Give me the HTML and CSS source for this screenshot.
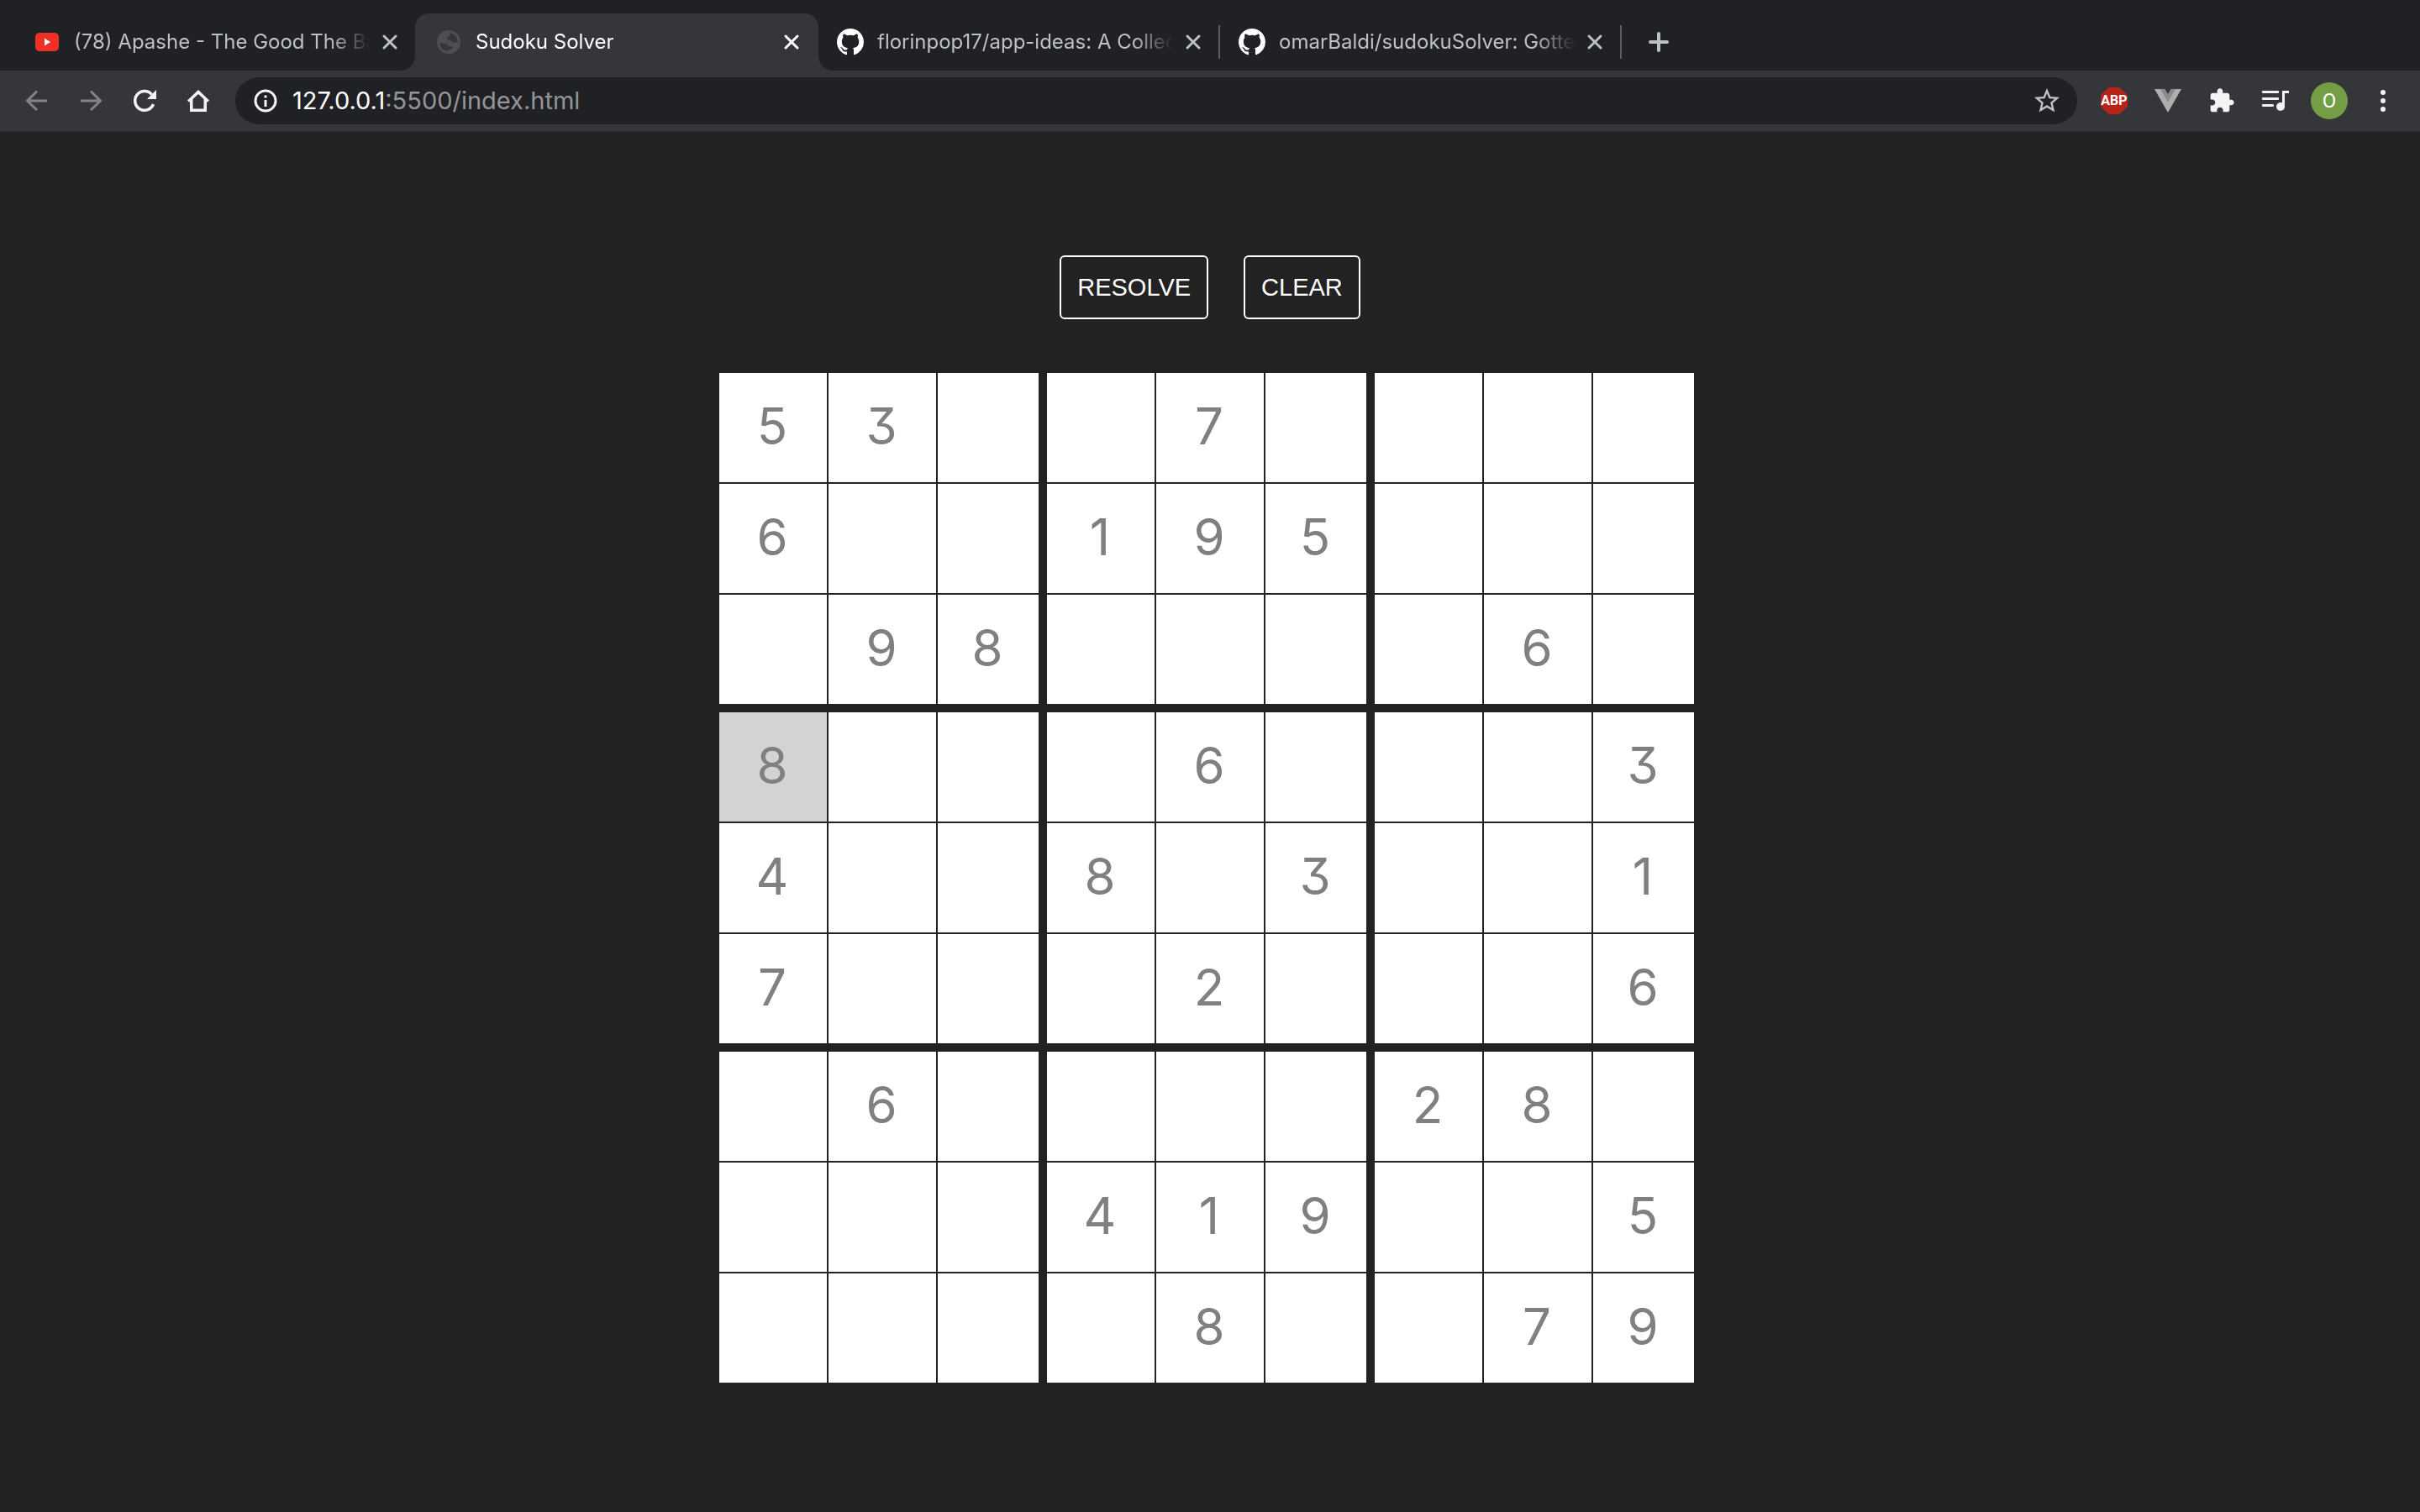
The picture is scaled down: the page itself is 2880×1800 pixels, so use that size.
FILE: index.html
```html
<!DOCTYPE html>
<html lang="en">
<head>
  <meta charset="utf-8">
  <title>Sudoku Solver</title>
  <link rel="stylesheet" href="styles.css">
</head>
<body>
  <svg class="sprite" aria-hidden="true">
    <symbol id="github" viewBox="0 0 16 16">
      <path d="M8 0C3.58 0 0 3.58 0 8c0 3.54 2.29 6.53 5.47 7.59.4.07.55-.17.55-.38 0-.19-.01-.82-.01-1.49-2.01.37-2.53-.49-2.69-.94-.09-.23-.48-.94-.82-1.13-.28-.15-.68-.52-.01-.53.63-.01 1.08.58 1.23.82.72 1.21 1.87.87 2.33.66.07-.52.28-.87.51-1.07-1.78-.2-3.64-.89-3.64-3.95 0-.87.31-1.59.82-2.15-.08-.2-.36-1.02.08-2.12 0 0 .67-.21 2.2.82.64-.18 1.32-.27 2-.27s1.36.09 2 .27c1.53-1.04 2.2-.82 2.2-.82.44 1.1.16 1.92.08 2.12.51.56.82 1.27.82 2.15 0 3.07-1.87 3.75-3.65 3.95.29.25.54.73.54 1.48 0 1.07-.01 1.93-.01 2.2 0 .21.15.46.55.38A8.01 8.01 0 0 0 16 8c0-4.42-3.58-8-8-8z"/>
    </symbol>
    <symbol id="close" viewBox="0 0 32 32">
      <path d="M9 9l14 14M23 9L9 23" fill="none" stroke="currentColor" stroke-width="3" stroke-linecap="round"/>
    </symbol>
  </svg>

  <header class="browser">
    <nav class="tabs" aria-label="Tabs">
      <div class="tab">
        <svg class="icon" viewBox="0 0 32 32"><rect x="2" y="5" width="28" height="22" rx="5" fill="#ee3124"/><path d="M13 11.500v9l7-4.500z" fill="#fff"/></svg>
        <a class="tab-title" href="#">(78) Apashe - The Good The Ba</a>
        <button class="tab-close" aria-label="Close tab"><svg class="icon"><use href="#close"/></svg></button>
      </div>
      <div class="tab tab-active">
        <svg class="icon" viewBox="0 0 32 32"><circle cx="16" cy="16" r="14" fill="#4e4f53"/><path d="M5.500 17.500h5c3 0 4.500 1 4.500 3.500h3.500c1.500 0 2 1 1.500 2.500s-2 1-3 1.500-1.500 1.500-.5 1.800C10 27 5.500 23 5.500 17.500zM17.500 5.200c-1 .8.500 1.800 0 3s-2.500.6-3.500 2 0 3 2 3.300 2.500 1 3.500 2.300 3 1.200 7 .7C27 10.500 23 5.500 17.500 5.200z" fill="#35363a"/></svg>
        <a class="tab-title" href="#">Sudoku Solver</a>
        <button class="tab-close" aria-label="Close tab"><svg class="icon"><use href="#close"/></svg></button>
      </div>
      <div class="tab tab-divided">
        <svg class="icon icon-white"><use href="#github"/></svg>
        <a class="tab-title" href="#">florinpop17/app-ideas: A Collec</a>
        <button class="tab-close" aria-label="Close tab"><svg class="icon"><use href="#close"/></svg></button>
      </div>
      <div class="tab tab-divided">
        <svg class="icon icon-white"><use href="#github"/></svg>
        <a class="tab-title" href="#">omarBaldi/sudokuSolver: Gotte</a>
        <button class="tab-close" aria-label="Close tab"><svg class="icon"><use href="#close"/></svg></button>
      </div>
      <button class="tab-new" aria-label="New tab"><svg class="icon" viewBox="0 0 32 32"><path d="M16 6v20M6 16h20" fill="none" stroke="currentColor" stroke-width="4" stroke-linecap="round"/></svg></button>
    </nav>

    <div class="toolbar">
      <div class="tools">
        <button class="tool tool-off" aria-label="Back"><svg class="icon" viewBox="0 0 32 32"><path d="M28 16H5M16 4.500L4.500 16 16 27" fill="none" stroke="currentColor" stroke-width="3"/></svg></button>
        <button class="tool tool-off" aria-label="Forward"><svg class="icon" viewBox="0 0 32 32"><path d="M4 16h23M16 4.500L27.500 16 16 27" fill="none" stroke="currentColor" stroke-width="3"/></svg></button>
        <button class="tool" aria-label="Reload"><svg class="icon" viewBox="0 0 32 32"><path d="M26.500 20A11.300 11.300 0 1 1 24.500 8.500" fill="none" stroke="currentColor" stroke-width="3.500"/><path d="M30 3v11H19z" fill="currentColor"/></svg></button>
        <button class="tool" aria-label="Home"><svg class="icon" viewBox="0 0 32 32"><path fill="currentColor" fill-rule="evenodd" d="M16 3l13 12.500-2 2h-1V29H6V17.500H5l-2-2zM16 8l-6.500 6v11.500h13V14z"/></svg></button>
      </div>
      <div class="address">
        <svg class="icon" viewBox="0 0 32 32"><circle cx="16" cy="16" r="12" fill="none" stroke="currentColor" stroke-width="3"/><path d="M14.500 9.500h3v3h-3zM14.500 15h3v8h-3z" fill="currentColor"/></svg>
        <span class="url" role="textbox" aria-label="Address" contenteditable="true" spellcheck="false">127.0.0.1<span class="url-path">:5500/index.html</span></span>
        <button class="bookmark" aria-label="Bookmark this page"><svg class="star" viewBox="0 0 24 24"><path fill="currentColor" d="M22 9.240l-7.190-.62L12 2 9.190 8.630 2 9.240l5.460 4.730L5.820 21 12 17.270 18.180 21l-1.630-7.030L22 9.240zM12 15.400l-3.760 2.270 1-4.280-3.320-2.880 4.380-.38L12 6.100l1.710 4.040 4.380.38-3.320 2.880 1 4.280L12 15.400z"/></svg></button>
      </div>
      <div class="tools">
        <button class="tool" aria-label="Adblock Plus"><span class="abp">ABP</span></button>
        <button class="tool" aria-label="Vue devtools"><svg class="icon" viewBox="0 0 32 32"><path d="M0 2h32L16 30z" fill="#aeaeae"/><path d="M7 2h18l-9 15.500z" fill="#8a8a8a"/><path d="M12.500 2h7L16 8z" fill="#35363a"/></svg></button>
        <button class="tool" aria-label="Extensions"><svg class="icon" viewBox="0 0 24 24"><path fill="currentColor" d="M20.500 11H19V7c0-1.100-.9-2-2-2h-4V3.500C13 2.120 11.880 1 10.500 1S8 2.120 8 3.500V5H4c-1.100 0-1.990.9-1.990 2v3.800H3.500c1.490 0 2.700 1.210 2.700 2.700s-1.210 2.700-2.700 2.700H2V20c0 1.100.9 2 2 2h3.800v-1.500c0-1.490 1.210-2.700 2.700-2.700s2.700 1.210 2.700 2.700V22H17c1.100 0 2-.9 2-2v-4h1.500c1.380 0 2.500-1.120 2.500-2.500S21.880 11 20.500 11z"/></svg></button>
        <button class="tool" aria-label="Media controls"><svg class="icon" viewBox="0 0 32 32" fill="currentColor"><rect y="4" width="20" height="3" rx="1"/><rect y="12" width="20" height="3" rx="1"/><rect y="20" width="14" height="3" rx="1"/><path d="M24 4h8v3h-5v16h-3z"/><circle cx="22" cy="23" r="5"/></svg></button>
        <button class="tool" aria-label="Profile"><span class="avatar">O</span></button>
        <button class="tool" aria-label="Menu"><svg class="icon" viewBox="0 0 32 32" fill="currentColor"><circle cx="16" cy="6" r="3"/><circle cx="16" cy="16" r="3"/><circle cx="16" cy="26" r="3"/></svg></button>
      </div>
    </div>
  </header>

  <main class="page">
    <div class="actions">
      <button class="action" type="button">RESOLVE</button>
      <button class="action" type="button" id="clear">CLEAR</button>
    </div>
    <div class="board" id="board"></div>
  </main>
  <script src="script.js"></script>
</body>
</html>
```
FILE: styles.css
```css
* {
  box-sizing: border-box;
}

body {
  margin: 0;
  min-height: 100vh;
  background: #222;
  font-family: Inter, "Liberation Sans", sans-serif;
}

button {
  margin: 0;
  padding: 0;
  border: 0;
  background: none;
  color: inherit;
  font: inherit;
}

.sprite {
  position: absolute;
  width: 0;
  height: 0;
}

.icon {
  display: block;
  flex: none;
  width: 32px;
  height: 32px;
}

.icon-white {
  fill: #fff;
}

/* Tab strip */
.tabs {
  display: flex;
  height: 84px;
  padding: 16px 16px 0;
  background: #202124;
  color: #bdc1c6;
}

.tab {
  position: relative;
  display: flex;
  flex: 0 1 478px;
  align-items: center;
  min-width: 0;
  padding: 0 14px 0 24px;
}

.tab-title {
  flex: 1;
  min-width: 0;
  margin: 0 8px 0 16px;
  overflow: hidden;
  color: inherit;
  font-size: 24px;
  line-height: 32px;
  text-decoration: none;
  white-space: nowrap;
  -webkit-mask-image: linear-gradient(to left, transparent, #000 48px);
  mask-image: linear-gradient(to left, transparent, #000 48px);
}

.tab-active {
  flex-basis: 480px;
  margin-right: -2px;
  padding-right: 16px;
  border-radius: 16px 16px 0 0;
  background: #35363a;
  color: #fff;
}

.tab-active::before,
.tab-active::after {
  content: "";
  position: absolute;
  bottom: 0;
  width: 16px;
  height: 16px;
}

.tab-active::before {
  right: 100%;
  background: radial-gradient(circle at 0 0, transparent 15px, #35363a 16px);
}

.tab-active::after {
  left: 100%;
  background: radial-gradient(circle at 100% 0, transparent 15px, #35363a 16px);
}

.tab-divided::after {
  content: "";
  position: absolute;
  left: 100%;
  width: 2px;
  height: 40px;
  background: #5b5c60;
}

.tab-new {
  padding: 0 30px;
}

/* Toolbar */
.toolbar {
  display: flex;
  align-items: center;
  gap: 12px;
  height: 74px;
  padding: 0 12px;
  border-bottom: 2px solid #292929;
  background: #35363a;
  color: #f1f3f4;
}

.tools {
  display: flex;
}

.tool {
  display: flex;
  align-items: center;
  justify-content: center;
  width: 64px;
  height: 56px;
}

.tool-off {
  color: #838487;
}

.address {
  display: flex;
  flex: 1;
  align-items: center;
  height: 56px;
  padding: 0 18px 0 20px;
  border-radius: 28px;
  background: #202124;
}

.url {
  flex: 1;
  margin: 0 16px;
  color: #fff;
  font-size: 29px;
  line-height: 36px;
  outline: none;
}

.url-path {
  color: #949597;
}

.bookmark {
  color: #c0c1c3;
}

.star {
  display: block;
  width: 36px;
  height: 36px;
}

.abp {
  width: 32px;
  height: 32px;
  background: #b92418;
  clip-path: polygon(30% 0, 70% 0, 100% 30%, 100% 70%, 70% 100%, 30% 100%, 0 70%, 0 30%);
  color: #fff;
  font: bold 16px/32px Roboto, sans-serif;
  text-align: center;
}

.avatar {
  width: 44px;
  height: 44px;
  border-radius: 50%;
  background: #739e46;
  color: #fff;
  font: 24px/44px Roboto, sans-serif;
  text-align: center;
}

/* Solver */
.page {
  display: flex;
  flex-direction: column;
  align-items: center;
  gap: 64px;
  padding: 146px 0;
}

.actions {
  display: flex;
  gap: 42px;
}

.action {
  height: 76px;
  padding: 0 19px;
  border: 2px solid #fff;
  border-radius: 6px;
  color: #fff;
  font: 29px/36px "Liberation Sans", Arial, sans-serif;
}

.board {
  display: grid;
  grid-template-columns: repeat(8, 130px) 120px;
  padding-right: 8px;
}

.cell {
  width: 100%;
  height: 132px;
  padding: 0 2px 4px 0;
  border: solid #222;
  border-width: 0 2px 2px 0;
  border-radius: 0;
  background: #fff;
  color: #808080;
  font-family: Inter, "Liberation Sans", sans-serif;
  font-size: 60px;
  font-weight: 400;
  font-feature-settings: "cv09" 1;
  text-align: center;
  outline: none;
}

.cell:nth-child(9n + 3),
.cell:nth-child(9n + 6) {
  border-right-width: 10px;
}

.cell:nth-child(9n) {
  border-right-width: 0;
}

/* Last row of each upper and middle block */
.cell:nth-child(n + 19):nth-child(-n + 27),
.cell:nth-child(n + 46):nth-child(-n + 54) {
  height: 140px;
  border-bottom-width: 10px;
}

.cell-selected {
  background: #d3d3d3;
}
```
FILE: script.js
```js
const rows = [
  "53..7....",
  "6..195...",
  ".98....6.",
  "8...6...3",
  "4..8.3..1",
  "7...2...6",
  ".6....28.",
  "...419..5",
  "....8..79",
];

const board = document.getElementById("board");

rows.forEach((row, r) => {
  [...row].forEach((digit, c) => {
    const cell = document.createElement("input");
    cell.className = r === 3 && c === 0 ? "cell cell-selected" : "cell";
    cell.type = "text";
    cell.maxLength = 1;
    cell.value = digit === "." ? "" : digit;
    cell.setAttribute("aria-label", `Row ${r + 1}, column ${c + 1}`);
    board.append(cell);
  });
});

document.getElementById("clear").addEventListener("click", () => {
  board.querySelectorAll(".cell").forEach((cell) => {
    cell.value = "";
  });
});
```
